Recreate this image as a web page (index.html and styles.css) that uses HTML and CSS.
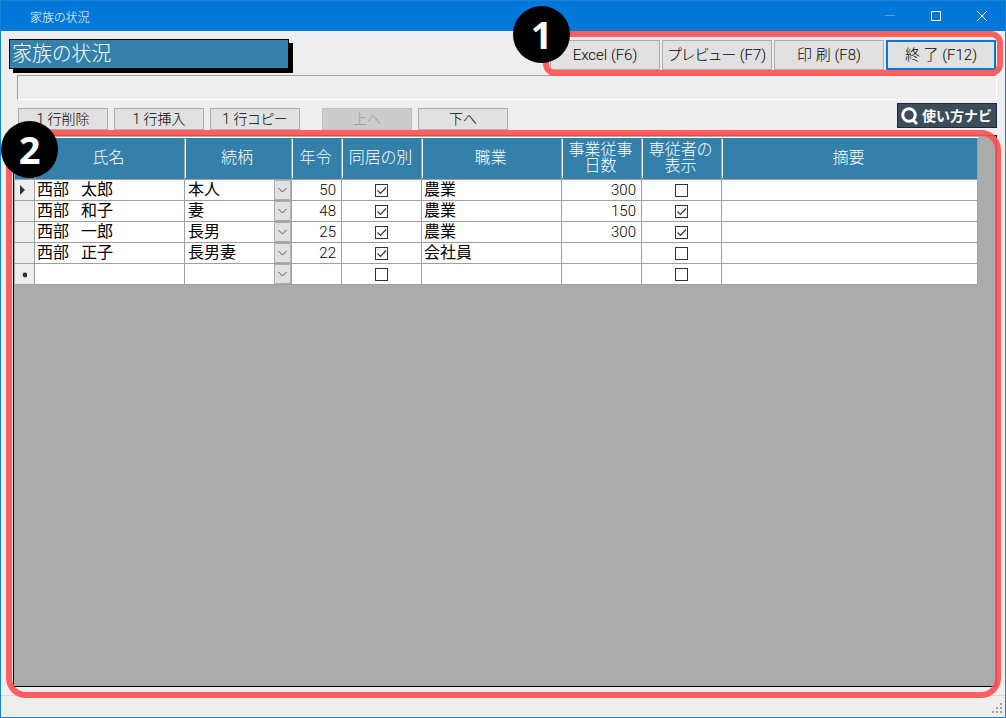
FILE: index.html
```
<!DOCTYPE html>
<html lang="ja">
<head>
    <meta charset="UTF-8">
    <meta name="viewport" content="width=device-width, initial-scale=1.0">
    <title>家族の状況</title>
    <link rel="stylesheet" href="styles.css">
</head>
<body>
    <div class="window">
        <header class="titlebar">
            <span class="titlebar-text">家族の状況</span>
            <button class="win-btn" aria-label="最小化" disabled>
                <svg width="12" height="12" viewBox="0 0 12 12"><path d="M1 5.500h10"/></svg>
            </button>
            <button class="win-btn" aria-label="最大化">
                <svg width="12" height="12" viewBox="0 0 12 12"><path d="M1.5 1.5h9v9h-9z"/></svg>
            </button>
            <button class="win-btn" aria-label="閉じる">
                <svg width="12" height="12" viewBox="0 0 12 12"><path d="M1 1l10 10M11 1L1 11"/></svg>
            </button>
        </header>

        <div class="top">
            <h1 class="screen-name">家族の状況</h1>
            <div class="commands">
                <button class="btn">Excel (F6)</button>
                <button class="btn">プレビュー (F7)</button>
                <button class="btn">印 刷 (F8)</button>
                <button class="btn btn-focus">終 了 (F12)</button>
                <div class="mark mark-commands"><span class="mark-no">1</span></div>
            </div>
        </div>

        <div class="message"></div>

        <div class="tools">
            <div class="row-tools">
                <button class="btn btn-small">1 行削除</button>
                <button class="btn btn-small">1 行挿入</button>
                <button class="btn btn-small">1 行コピー</button>
            </div>
            <div class="row-tools">
                <button class="btn btn-small" disabled>上へ</button>
                <button class="btn btn-small">下へ</button>
            </div>
            <button class="navi">
                <svg width="18" height="20" viewBox="0 0 18 20"><circle cx="8" cy="9" r="6.3"/><path d="M11.5 13.5l4.5 4.5"/></svg>
                使い方ナビ
            </button>
        </div>

        <main class="grid">
            <table class="family">
                <colgroup>
                    <col class="col-mark">
                    <col class="col-name">
                    <col class="col-relation">
                    <col class="col-age">
                    <col class="col-flag">
                    <col class="col-job">
                    <col class="col-flag">
                    <col class="col-flag">
                    <col>
                </colgroup>
                <thead>
                    <tr>
                        <th></th>
                        <th>氏名</th>
                        <th>続柄</th>
                        <th>年令</th>
                        <th>同居の別</th>
                        <th>職業</th>
                        <th>事業従事<br>日数</th>
                        <th>専従者の<br>表示</th>
                        <th>摘要</th>
                    </tr>
                </thead>
                <tbody>
                    <tr>
                        <td class="mark-cell"><svg width="5" height="10" viewBox="0 0 5 10"><path d="M0 0l5 5-5 5z"/></svg></td>
                        <td>西部   太郎</td>
                        <td class="pick"><select aria-label="続柄"><option>本人</option></select></td>
                        <td class="num">50</td>
                        <td class="check"><input type="checkbox" aria-label="同居の別" checked></td>
                        <td>農業</td>
                        <td class="num">300</td>
                        <td class="check"><input type="checkbox" aria-label="専従者の表示"></td>
                        <td></td>
                    </tr>
                    <tr>
                        <td class="mark-cell"></td>
                        <td>西部   和子</td>
                        <td class="pick"><select aria-label="続柄"><option>妻</option></select></td>
                        <td class="num">48</td>
                        <td class="check"><input type="checkbox" aria-label="同居の別" checked></td>
                        <td>農業</td>
                        <td class="num">150</td>
                        <td class="check"><input type="checkbox" aria-label="専従者の表示" checked></td>
                        <td></td>
                    </tr>
                    <tr>
                        <td class="mark-cell"></td>
                        <td>西部   一郎</td>
                        <td class="pick"><select aria-label="続柄"><option>長男</option></select></td>
                        <td class="num">25</td>
                        <td class="check"><input type="checkbox" aria-label="同居の別" checked></td>
                        <td>農業</td>
                        <td class="num">300</td>
                        <td class="check"><input type="checkbox" aria-label="専従者の表示" checked></td>
                        <td></td>
                    </tr>
                    <tr>
                        <td class="mark-cell"></td>
                        <td>西部   正子</td>
                        <td class="pick"><select aria-label="続柄"><option>長男妻</option></select></td>
                        <td class="num">22</td>
                        <td class="check"><input type="checkbox" aria-label="同居の別" checked></td>
                        <td>会社員</td>
                        <td class="num"></td>
                        <td class="check"><input type="checkbox" aria-label="専従者の表示"></td>
                        <td></td>
                    </tr>
                    <tr>
                        <td class="mark-cell"><svg width="7" height="7" viewBox="0 0 7 7"><circle cx="5" cy="4" r="2.4"/></svg></td>
                        <td></td>
                        <td class="pick"><select aria-label="続柄"><option></option></select></td>
                        <td class="num"></td>
                        <td class="check"><input type="checkbox" aria-label="同居の別"></td>
                        <td></td>
                        <td class="num"></td>
                        <td class="check"><input type="checkbox" aria-label="専従者の表示"></td>
                        <td></td>
                    </tr>
                </tbody>
            </table>
            <div class="mark mark-grid"><span class="mark-no">2</span></div>
        </main>

        <footer class="status">
            <svg width="12" height="12" viewBox="0 0 12 12"><path d="M8 0h2v2h-2zM4 4h2v2h-2zM8 4h2v2h-2zM0 8h2v2h-2zM4 8h2v2h-2zM8 8h2v2h-2z"/></svg>
        </footer>
    </div>
</body>
</html>
```

FILE: styles.css
```
* {
    box-sizing: border-box;
}

body {
    margin: 0;
    font-family: Roboto, "Noto Sans CJK JP", sans-serif;
    font-size: 16px;
    font-weight: 300;
    font-feature-settings: "palt";
    color: #000;
}

button, select, input {
    margin: 0;
    font: inherit;
    font-feature-settings: inherit;
    color: inherit;
}

.window {
    display: flex;
    flex-direction: column;
    min-height: 100vh;
    border: 1px solid #1883d7;
    background: #efeeee;
}

/* title bar */
.titlebar {
    display: flex;
    align-items: center;
    height: 30px;
    padding-left: 29px;
    background: #0078d9;
    color: #fff;
    font-size: 12px;
}

.titlebar-text {
    flex: 1;
}

.win-btn {
    display: flex;
    align-items: center;
    justify-content: center;
    width: 46px;
    height: 30px;
    padding: 0;
    border: none;
    background: none;
}

.win-btn svg {
    fill: none;
    stroke: #fff;
}

.win-btn:disabled svg {
    stroke: #4da1e5;
}

/* screen name and function keys */
.top {
    display: flex;
    justify-content: space-between;
    align-items: flex-start;
    padding: 8px 9px 0 8px;
}

.screen-name {
    width: 280px;
    height: 30px;
    margin: 0;
    padding-left: 2px;
    border: 1px solid #000;
    box-shadow: 4px 4px 0 #000;
    background: #3380ab;
    color: #fff;
    font-size: 20px;
    font-weight: 300;
    line-height: 28px;
}

.commands {
    position: relative;
    display: flex;
    gap: 2px;
    margin-top: 1px;
}

.btn {
    width: 110px;
    height: 30px;
    padding: 0;
    border: 1px solid #adadad;
    background: #e1e1e1;
    font-size: 15px;
    line-height: 20px;
    white-space: nowrap;
}

.btn-focus {
    border: 2px solid #0078d9;
}

.btn-small {
    width: 90px;
    height: 22px;
    font-size: 14px;
}

.btn:disabled {
    border-color: #bfbfbf;
    background: #ccc;
    color: #999;
}

.message {
    height: 25px;
    margin: 5px 8px 0 16px;
    border: 1px solid;
    border-color: #a0a0a0 #fff #fff #a0a0a0;
}

/* row editing buttons */
.tools {
    display: flex;
    align-items: flex-start;
    gap: 22px;
    padding: 3px 8px 0 17px;
}

.row-tools {
    display: flex;
    gap: 6px;
    margin-top: 5px;
}

.navi {
    display: flex;
    align-items: center;
    gap: 3px;
    width: 100px;
    height: 25px;
    margin-left: auto;
    padding: 0 3px;
    border: 1px solid #1f2a38;
    background: #3d4c5a;
    color: #fff;
    font-size: 14px;
    font-weight: 700;
    font-feature-settings: normal;
    line-height: 20px;
    white-space: nowrap;
}

.navi svg {
    flex: none;
    fill: none;
    stroke: #fff;
    stroke-width: 3;
}

/* data grid */
.grid {
    position: relative;
    flex: 1;
    margin: 5px 8px 8px 12px;
    padding: 1px 18px 0 1px;
    border: 1px solid #000;
    background: #ababab;
}

.family {
    width: 100%;
    table-layout: fixed;
    border-collapse: separate;
    border-spacing: 0;
    border-top: 1px solid #fff;
}

.col-mark { width: 20px; }
.col-name { width: 150px; }
.col-relation { width: 107px; }
.col-age { width: 50px; }
.col-flag { width: 80px; }
.col-job { width: 140px; }

.family th {
    height: 42px;
    padding: 0 2px 2px 0;
    border-right: 1px solid #a0a0a0;
    border-bottom: 1px solid #a0a0a0;
    background: #3380ab linear-gradient(#fff, #fff) no-repeat 0 1px / 1px 39px;
    color: #fff;
    font-weight: 300;
    line-height: 16px;
    white-space: nowrap;
}

.family th:first-child {
    background-image: none;
}

.family td {
    height: 21px;
    padding: 0 2px;
    border-right: 1px solid #a0a0a0;
    border-bottom: 1px solid #a0a0a0;
    background: #fff;
    font-weight: 400;
    line-height: 20px;
    white-space: pre;
}

.family .num {
    padding-right: 5px;
    font-weight: 300;
    font-size: 15px;
    text-align: right;
}

.family .mark-cell {
    padding: 0 5px;
    background: #efeeee;
}

.mark-cell svg {
    display: block;
    fill: #333;
}

.family .pick,
.family .check {
    padding: 0;
}

.pick select {
    display: block;
    width: 100%;
    height: 20px;
    padding: 0 18px 0 3px;
    border: none;
    border-radius: 0;
    appearance: none;
    background: #fff url("data:image/svg+xml,%3Csvg xmlns='http://www.w3.org/2000/svg' width='17' height='20'%3E%3Cpath d='M.5.5h16v19H.5z' fill='%23e1e1e1' stroke='%23adadad'/%3E%3Cpath d='M4.500 8l4 4 4-4' fill='none' stroke='%23555'/%3E%3C/svg%3E") no-repeat right top;
    line-height: 20px;
}

.check input {
    display: block;
    width: 13px;
    height: 13px;
    margin: 0 auto;
    border: 1px solid #333;
    appearance: none;
    background: #fff;
}

.check input:checked {
    background: #fff url("data:image/svg+xml,%3Csvg xmlns='http://www.w3.org/2000/svg' width='11' height='11'%3E%3Cpath d='M1.500 5.500l3 3 5.500-6' fill='none' stroke='%23333' stroke-width='1.200'/%3E%3C/svg%3E") no-repeat 0 0;
}

/* status bar */
.status {
    display: flex;
    align-items: flex-end;
    justify-content: flex-end;
    height: 22px;
    padding: 0 1px 2px 0;
    border-top: 1px solid #d7d7d7;
}

.status svg {
    fill: #a0a0a0;
}

/* numbered callouts */
.mark {
    position: absolute;
    border: 6px solid rgba(255, 80, 80, 0.9);
    pointer-events: none;
}

.mark-commands {
    inset: -9px -7px -6px -7px;
    border-radius: 12px;
}

.mark-grid {
    inset: -6px -5px -12px -8px;
    border-radius: 20px;
}

.mark-no {
    position: absolute;
    top: -31px;
    left: -36px;
    width: 57px;
    height: 57px;
    border-radius: 50%;
    background: #000;
    color: #fff;
    font-family: "Open Sans", sans-serif;
    font-size: 38px;
    font-weight: 700;
    line-height: 56px;
    text-align: center;
}

.mark-grid .mark-no {
    top: -15px;
    left: -11px;
}
```
